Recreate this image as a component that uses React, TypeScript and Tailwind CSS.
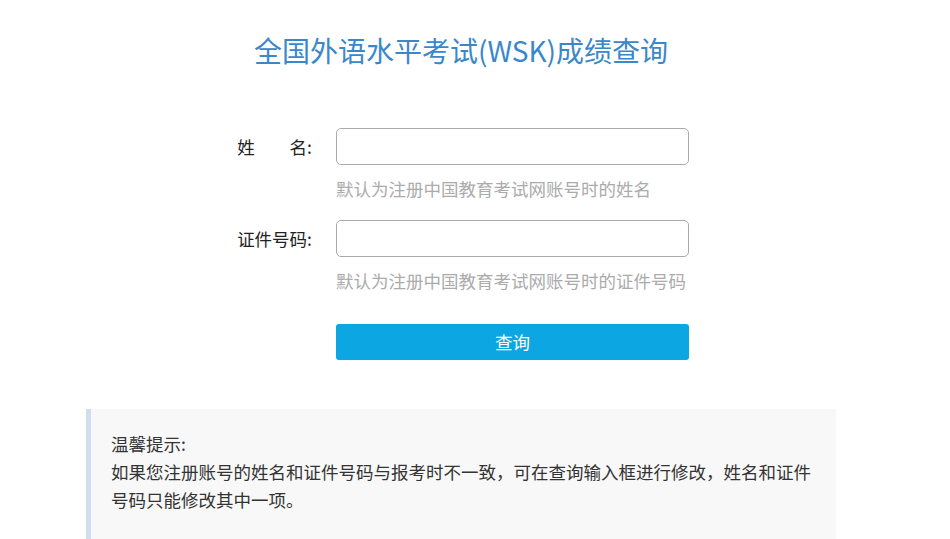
import React from "react";

const font = { fontFamily: '"Noto Sans CJK SC", "Noto Sans", sans-serif' };

function Row({ label, hint }: { label: React.ReactNode; hint: string }) {
  return (
    <div>
      <div className="flex items-center">
        <div className="w-[226px] text-right text-[17.5px] leading-[37px] text-[#222] pr-[0px]">{label}</div>
        <input
          className="ml-[24px] w-[353px] h-[37px] rounded-[5px] border border-[#aaaaaa] bg-white outline-none"
          type="text"
        />
      </div>
      <div className="ml-[250px] mt-[10px] text-[17.5px] leading-[28px] text-[#ababab]">{hint}</div>
    </div>
  );
}

export default function App() {
  return (
    <div className="w-[950px] h-[539px] bg-white overflow-hidden" style={font}>
      <div className="ml-[86px] w-[750px]">
        <h1 className="pt-[30px] text-center text-[28px] leading-[40px] text-[#3a87c9] font-normal">
          全国外语水平考试(WSK)成绩查询
        </h1>
        <div className="mt-[58px]">
          <Row label={<span>姓　　名:</span>} hint="默认为注册中国教育考试网账号时的姓名" />
          <div className="mt-[17px]">
            <Row label={<span>证件号码:</span>} hint="默认为注册中国教育考试网账号时的证件号码" />
          </div>
          <div className="mt-[29px] ml-[250px]">
            <button className="w-[353px] h-[36px] rounded-[3px] bg-[#0ca6e2] text-white text-[17.5px] leading-[36px]">
              查询
            </button>
          </div>
        </div>
        <div className="mt-[49px] border-l-[5px] border-[#d0dff0] bg-[#f8f8f8] pl-[20px] pr-[24px] pt-[21px] pb-[30px] text-[17.5px] leading-[28px] text-[#333]">
          <div>温馨提示:</div>
          <div>如果您注册账号的姓名和证件号码与报考时不一致，可在查询输入框进行修改，姓名和证件号码只能修改其中一项。</div>
        </div>
      </div>
    </div>
  );
}
